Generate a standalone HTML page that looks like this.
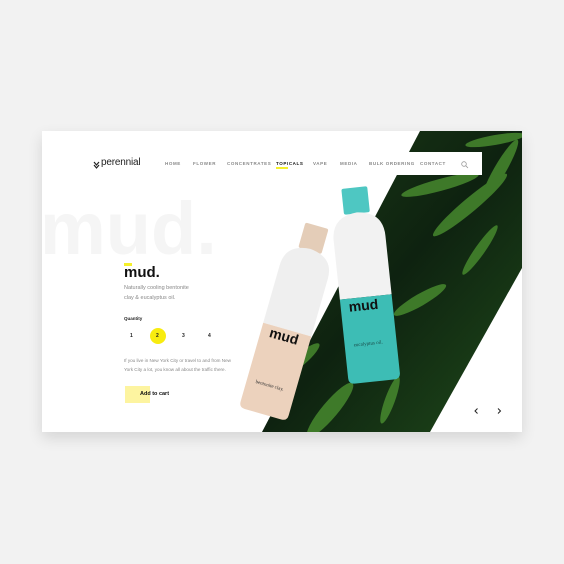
<!DOCTYPE html><html><head><style>
body{margin:0;width:564px;height:564px;background:#f2f2f2;font-family:"Liberation Sans",sans-serif;overflow:hidden;position:relative}
.card{position:absolute;left:42px;top:131px;width:480px;height:301px;background:#fff;box-shadow:0 6px 14px rgba(0,0,0,.12);overflow:hidden}
.a{position:absolute}
.nav span{position:absolute;top:161px;font-size:4.5px;letter-spacing:.6px;color:#888;font-weight:bold}
</style></head><body>
<div class="card"></div>
<svg class="a" style="left:0;top:0" width="564" height="564">
<defs><linearGradient id="g" x1="0" y1="0" x2="1" y2="1"><stop offset="0" stop-color="#1c3d16"/><stop offset=".5" stop-color="#0e2210"/><stop offset="1" stop-color="#1f4a1a"/></linearGradient>
<clipPath id="c"><polygon points="420,131 522,131 522,268 430,432 262,432"/></clipPath></defs>
<polygon points="420,131 522,131 522,268 430,432 262,432" fill="url(#g)"/>
<g fill="#4a8f30" opacity=".8" clip-path="url(#c)">
<ellipse cx="470" cy="205" rx="48" ry="7" transform="rotate(-40 470 205)"/><ellipse cx="440" cy="185" rx="40" ry="6" transform="rotate(-15 440 185)"/>
<ellipse cx="500" cy="170" rx="35" ry="6" transform="rotate(-60 500 170)"/><ellipse cx="495" cy="140" rx="30" ry="5" transform="rotate(-10 495 140)"/>
<ellipse cx="480" cy="250" rx="30" ry="5" transform="rotate(-55 480 250)"/><ellipse cx="420" cy="300" rx="30" ry="6" transform="rotate(-30 420 300)"/>
<ellipse cx="330" cy="410" rx="35" ry="8" transform="rotate(-50 330 410)"/><ellipse cx="390" cy="400" rx="25" ry="5" transform="rotate(-70 390 400)"/>
<ellipse cx="300" cy="360" rx="25" ry="6" transform="rotate(-40 300 360)"/>
</g>
<rect x="165" y="152" width="317" height="23" fill="#fff"/>
<text x="40" y="254" font-family="Liberation Sans" font-weight="bold" font-size="74" fill="#f5f5f5">mud.</text>
<!-- beige bottle -->
<g transform="rotate(16 290 320)">
<rect x="278" y="222" width="24" height="26" rx="2" fill="#e4cdb8"/>
<path d="M265,270 Q265,248 290,246 Q315,248 315,270 L315,330 L265,330 Z" fill="#efefef"/>
<path d="M265,330 L315,330 L315,412 Q315,418 309,418 L271,418 Q265,418 265,412 Z" fill="#ecd2bd"/>
<text x="274" y="342" font-size="14" font-weight="bold" fill="#111">mud</text>
<text x="274" y="390" font-size="5" fill="#333" font-family="Liberation Serif">bentonite clay.</text>
</g>
<!-- teal bottle -->
<g transform="rotate(-6 365 290)">
<rect x="352" y="187" width="26" height="26" rx="2" fill="#4ec7c2"/>
<path d="M339,238 Q339,214 365,212 Q391,214 391,238 L391,297 L339,297 Z" fill="#f2f2f2"/>
<path d="M339,297 L391,297 L391,376 Q391,382 385,382 L345,382 Q339,382 339,376 Z" fill="#3dbdb5"/>
<text x="347" y="310" font-size="14" font-weight="bold" fill="#111">mud</text>
<text x="348" y="345" font-size="5" fill="#1a4a48" font-family="Liberation Serif">eucalyptus oil.</text>
</g>
<circle cx="476" cy="411" r="10" fill="#fff"/><circle cx="499" cy="411" r="10" fill="#fff"/>
<path d="M477.5,408.5 L475,411 L477.5,413.5" stroke="#222" fill="none" stroke-width="1"/>
<path d="M498,408.5 L500.5,411 L498,413.5" stroke="#222" fill="none" stroke-width="1"/>
<circle cx="464" cy="164" r="2.3" stroke="#999" fill="none" stroke-width=".8"/><path d="M465.7,165.7 L468,168" stroke="#999" stroke-width=".8"/>
<path d="M94,162 L96.5,165 L99,162 M94,165 L96.5,168 L99,165" stroke="#222" fill="none" stroke-width="1.2"/>
<rect x="124" y="263" width="8" height="3" fill="#f5f02a"/>
<circle cx="158" cy="336" r="8" fill="#f8ec10"/>
<rect x="125" y="386" width="25" height="17" fill="#fdf4a0"/>
</svg>
<div class="a" style="left:101px;top:157px;font-size:10px;color:#222;letter-spacing:-.2px">perennial</div>
<div class="nav">
<span style="left:165px">HOME</span><span style="left:193px">FLOWER</span><span style="left:227px">CONCENTRATES</span><span style="left:276px;color:#111">TOPICALS</span><span style="left:313px">VAPE</span><span style="left:340px">MEDIA</span><span style="left:369px">BULK ORDERING</span><span style="left:420px">CONTACT</span>
</div>
<div class="a" style="left:276px;top:167px;width:12px;height:2px;background:#f5f02a"></div>
<div class="a" style="left:124px;top:264px;font-size:15px;font-weight:bold;color:#111">mud.</div>
<div class="a" style="left:124px;top:283px;font-size:5.5px;line-height:10px;color:#888">Naturally cooling bentonite<br>clay &amp; eucalyptus oil.</div>
<div class="a" style="left:124px;top:316px;font-size:4.5px;font-weight:bold;color:#222">Quantity</div>
<div class="a" style="left:130px;top:333px;font-size:5px;font-weight:bold;color:#222">1</div>
<div class="a" style="left:156px;top:333px;font-size:5px;font-weight:bold;color:#222">2</div>
<div class="a" style="left:182px;top:333px;font-size:5px;font-weight:bold;color:#222">3</div>
<div class="a" style="left:208px;top:333px;font-size:5px;font-weight:bold;color:#222">4</div>
<div class="a" style="left:124px;top:356px;font-size:4.6px;line-height:9px;color:#888">If you live in New York City or travel to and from New<br>York City a lot, you know all about the traffic there.</div>
<div class="a" style="left:140px;top:391px;font-size:5.5px;font-weight:bold;color:#111">Add to cart</div>
</body></html>
